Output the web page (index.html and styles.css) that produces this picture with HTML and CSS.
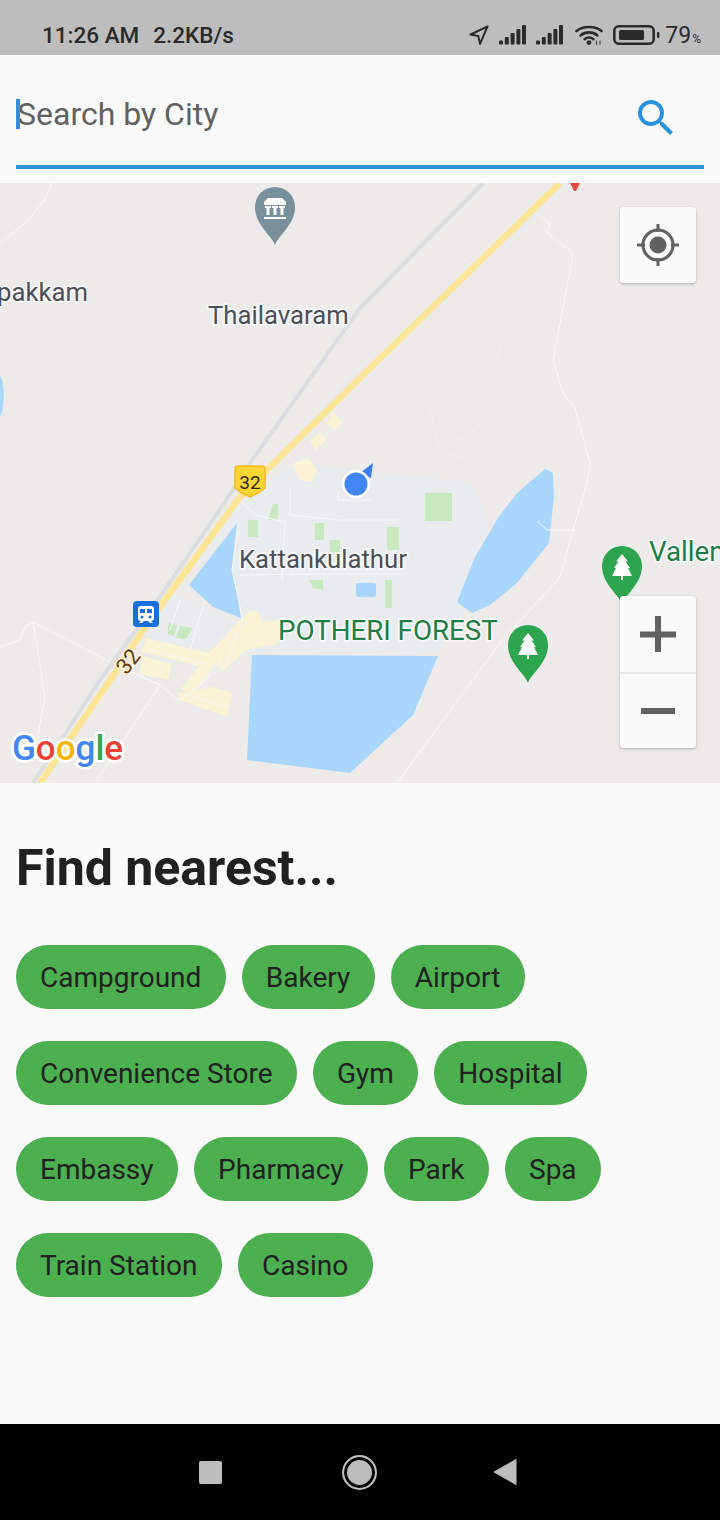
FILE: index.html
```html
<!DOCTYPE html>
<html lang="en">
<head>
  <meta name="viewport" content="width=device-width, initial-scale=1.0">
  <meta charset="UTF-8">
  <title>Find nearest</title>
  <link rel="stylesheet" href="styles.css">
</head>
<body>

<div class="statusbar">
  <div class="status-left"><span>11:26 AM</span><span>2.2KB/s</span></div>
  <div class="status-right">
    <svg class="ic-nav" width="20" height="20" viewBox="0 0 20 20"><path d="M18.500 1.500 1.500 9.500l7.800 1.600 1.700 7.800z" fill="none" stroke="#2b2b2b" stroke-width="2" stroke-linejoin="round"/></svg>
    <svg class="ic-signal" width="27" height="20" viewBox="0 0 27 20"><rect x="0" y="15.500" width="4" height="4" rx="1"/><rect x="5.800" y="12" width="4" height="7.500" rx="1"/><rect x="11.600" y="8" width="4" height="11.500" rx="1"/><rect x="17.400" y="4" width="4" height="15.500" rx="1"/><rect x="23" y="0" width="4" height="19.500" rx="1"/></svg>
    <svg class="ic-signal" width="27" height="20" viewBox="0 0 27 20"><rect x="0" y="15.500" width="4" height="4" rx="1"/><rect x="5.800" y="12" width="4" height="7.500" rx="1"/><rect x="11.600" y="8" width="4" height="11.500" rx="1"/><rect x="17.400" y="4" width="4" height="15.500" rx="1"/><rect x="23" y="0" width="4" height="19.500" rx="1"/></svg>
    <svg class="ic-wifi" width="28" height="20" viewBox="0 0 28 20"><g fill="none" stroke="#2b2b2b" stroke-width="2.600" stroke-linecap="round"><path d="M1.500 6C8 .6 20 .6 26.500 6"/><path d="M5.600 10.400c4.800-4 12-4 16.800 0"/><path d="M9.600 14.200c2.600-2 6.200-2 8.800 0"/></g><circle cx="14" cy="17.600" r="2.400" fill="#2b2b2b"/><path d="M21.500 15.500v4.500M25 15.500v4.500" stroke="#555" stroke-width="1.200"/></svg>
    <svg class="ic-batt" width="47" height="20" viewBox="0 0 47 20"><rect x="1.300" y="1.300" width="39.400" height="17.400" rx="4.500" fill="none" stroke="#2b2b2b" stroke-width="2.600"/><rect x="6" y="5" width="25" height="10" rx="1.500" fill="#2b2b2b"/><rect x="44" y="7" width="2.400" height="6" rx="1" fill="#2b2b2b"/></svg>
    <span class="batt-text">79<small>%</small></span>
  </div>
</div>

<div class="search">
  <div class="search-row">
    <span class="caret"></span>
    <span class="search-hint">Search by City</span>
    <svg class="search-icon" width="48" height="48" viewBox="0 0 24 24"><path d="M15.500 14h-.79l-.28-.27A6.470 6.470 0 0 0 16 9.500 6.500 6.500 0 1 0 9.500 16c1.610 0 3.090-.59 4.230-1.570l.27.28v.79l5 4.990L20.490 19l-4.990-5zm-6 0C7.010 14 5 11.990 5 9.500S7.010 5 9.500 5 14 7.010 14 9.500 11.990 14 9.500 14z"/></svg>
  </div>
</div>

<div class="map">
  <svg class="map-canvas" width="720" height="600" viewBox="0 183 720 600">
    <rect class="land" x="0" y="183" width="720" height="600"/>

    <!-- town -->
    <path class="town" d="M296 462 350 470 470 482 488 520 470 596 440 652 250 652 240 620 190 590 240 500z"/>
    <path class="town" d="M165 590 240 625 215 650 150 640z"/>

    <!-- built up strips -->
    <g class="built">
      <path d="M146 638 212 654 208 668 142 652z"/>
      <path d="M142 656 172 664 168 680 140 674z"/>
      <path d="M177 693 213 687 233 693 227 717 180 700z"/>
      <path d="M180 690 212 650 222 654 196 692z"/>
      <path d="M210 652 248 612 258 610 262 622 278 620 278 644 246 650 222 672z"/>
      <path d="M333 413 343 422 335 430 326 422z"/>
      <path d="M292 464 308 458 317 470 312 482 300 480z"/>
      <path d="M310 442 320 432 326 440 316 450z"/>
    </g>

    <!-- parks -->
    <g class="park">
      <rect x="425" y="493" width="27" height="28"/>
      <rect x="248" y="520" width="10" height="17"/>
      <path d="M268 520 273 504 278 504 278 520z"/>
      <rect x="315" y="523" width="9" height="17"/>
      <rect x="330" y="540" width="10" height="12"/>
      <rect x="387" y="527" width="12" height="23"/>
      <rect x="385" y="580" width="7" height="28"/>
      <path d="M168 623 177 625 174 636 168 634z"/>
      <path d="M180 626 193 628 186 639 176 638z"/>
      <path d="M309 580 323 580 323 590 313 588z"/>
    </g>

    <!-- water -->
    <g class="water">
      <path d="M237 523 232 567 241 618 213 607 189 585z"/>
      <path d="M252 655 438 656 413 715 350 773 247 760z"/>
      <path d="M545 469 553 473 554 497 549 543 517 583 490 605 472 613 457 602 475 557 498 518 517 493z"/>
      <rect x="356" y="583" width="20" height="14" rx="2"/>
      <path d="M0 375C5 385 5 405 0 417z"/>
    </g>

    <!-- minor roads -->
    <g class="road">
      <path d="M535 213 550 223 547 233 572 252 572 260 553 360 563 393 575 408 590 463 587 483 573 530 560 577 500 643 397 783"/>
      <path d="M0 243C25 225 45 205 52 183"/>
      <path d="M0 647 20 640 25 627 33 622 110 662 160 685 178 700"/>
      <path d="M33 622 45 697 37 740"/>
      <path d="M160 685 97 780"/>
      <path d="M537 521 547 530 575 530"/>
      <path d="M150 650 205 664M184 694 228 707M195 690 222 660"/>
    </g>
    <g class="road-town">
      <path d="M290 490 290 515 340 520 400 520M240 500 255 515 285 522M285 520 282 580M338 490 338 500 372 500M240 575 320 574 400 574M205 600 190 650M180 600 170 630"/>
      <path d="M238 530 232 570 243 620 225 665 180 700"/>
    </g>
    <g class="road-faint">
      <path d="M440 300 480 330 500 345 497 360 515 375M445 420 460 440 480 425M430 410 440 450 470 460M450 250 480 270M600 330 640 310"/>
    </g>

    <path class="rail" d="M483 183 360 308 250 463 233 490 160 597 100 680 33 783"/>
    <path class="highway" d="M560 183 360 378 267 470 240 497 143 630 117 670 40 783"/>
    <path class="shade-red" d="M570 183h10l-4 8h-2z"/>

    <!-- labels -->
    <g class="label">
      <text class="label-grey" x="-3" y="301">pakkam</text>
      <text class="label-grey" x="208" y="324">Thailavaram</text>
      <text class="label-grey" x="239" y="568">Kattankulathur</text>
      <text class="label-green" x="278" y="640">POTHERI FOREST</text>
      <text class="label-green" x="649" y="561">Vallen</text>
    </g>

    <!-- museum pin -->
    <g transform="translate(275 187)">
      <path class="pin-grey" d="M0 58C-2 50-20 38-20 20A20 20 0 1 1 20 20C20 38 2 50 0 58Z"/>
      <path class="pin-glyph" d="M-7 11H7L11 15V18H-11V15ZM-10 19H-4V21H-5.500V28H-8.500V21H-10ZM-3 19H3V21H1.500V28H-1.500V21H-3ZM4 19H10V21H8.500V28H5.500V21H4ZM-11 30H11V32H-11Z"/>
    </g>

    <!-- forest pins -->
    <g transform="translate(528 625)">
      <path class="pin-green" d="M0 58C-2 50-20 38-20 20A20 20 0 1 1 20 20C20 38 2 50 0 58Z"/>
      <path class="pin-glyph" d="M0 8 6 15.500H3.500L8 22H6L10 30H1V34H-1V30H-10L-6 22H-8L-3.500 15.500H-6Z"/>
    </g>
    <g transform="translate(622 546)">
      <path class="pin-green" d="M0 58C-2 50-20 38-20 20A20 20 0 1 1 20 20C20 38 2 50 0 58Z"/>
      <path class="pin-glyph" d="M0 8 6 15.500H3.500L8 22H6L10 30H1V34H-1V30H-10L-6 22H-8L-3.500 15.500H-6Z"/>
    </g>

    <!-- highway shield -->
    <path class="shield" d="M238 466H262Q265 466 265 469V488L258 493 250 497 242 493 235 488V469Q235 466 238 466Z"/>
    <text class="shield-text" x="250" y="489">32</text>
    <text class="road-num" transform="translate(134 666) rotate(-52)">32</text>

    <!-- train stop -->
    <rect class="train-bg" x="133" y="601" width="26" height="26" rx="4"/>
    <path class="pin-glyph" d="M141 606H151Q154 606 154 609V618Q154 621 151 621L153 623H150L148 621H144L142 623H139L141 621Q138 621 138 618V609Q138 606 141 606ZM140 609V613H145V609ZM147 609V613H152V609ZM142 615.500A1.500 1.500 0 1 0 142 618.500 1.500 1.500 0 1 0 142 615.500ZM150 615.500A1.500 1.500 0 1 0 150 618.500 1.500 1.500 0 1 0 150 615.500Z" fill-rule="evenodd"/>

    <!-- my location -->
    <path class="heading" d="M360 473 373 463 371 478z"/>
    <circle class="me-ring" cx="356" cy="484" r="14"/>
    <circle class="me-dot" cx="356" cy="484" r="11.500"/>

    <!-- google mark -->
    <text class="google" x="12" y="760"><tspan class="g-blue">G</tspan><tspan class="g-red">o</tspan><tspan class="g-yellow">o</tspan><tspan class="g-blue">g</tspan><tspan class="g-green">l</tspan><tspan class="g-red">e</tspan></text>
  </svg>

  <div class="map-btn locate">
    <svg width="44" height="44" viewBox="0 0 44 44"><circle cx="22" cy="22" r="15" fill="none" stroke="#616161" stroke-width="3"/><circle cx="22" cy="22" r="8.500" fill="#616161"/><path d="M22 1v8M22 35v8M1 22h8M35 22h8" stroke="#616161" stroke-width="3"/></svg>
  </div>
  <div class="zoom">
    <div class="zoom-btn">
      <svg width="36" height="36" viewBox="0 0 36 36"><path d="M0 15.500h36v6H0zM15 0h6v36h-6z" fill="#616161"/></svg>
    </div>
    <div class="zoom-btn">
      <svg width="36" height="36" viewBox="0 0 36 36"><path d="M1 15h34v6H1z" fill="#616161"/></svg>
    </div>
  </div>
</div>

<div class="nearest">
  <h1>Find nearest...</h1>
  <div class="chips">
    <span class="chip">Campground</span>
    <span class="chip">Bakery</span>
    <span class="chip">Airport</span>
    <span class="chip">Convenience Store</span>
    <span class="chip">Gym</span>
    <span class="chip">Hospital</span>
    <span class="chip">Embassy</span>
    <span class="chip">Pharmacy</span>
    <span class="chip">Park</span>
    <span class="chip">Spa</span>
    <span class="chip">Train Station</span>
    <span class="chip">Casino</span>
  </div>
</div>

<div class="navbar">
  <span class="nav-square"></span>
  <span class="nav-home"></span>
  <svg class="nav-back" width="24" height="26" viewBox="0 0 24 26"><path d="M23 .5V25.500L1 13z" fill="#bdbdbd" stroke="#bdbdbd" stroke-linejoin="round"/></svg>
</div>

</body>
</html>
```

FILE: styles.css
```css
* {
  box-sizing: border-box;
}

body {
  margin: 0;
  width: 720px;
  height: 1520px;
  display: flex;
  flex-direction: column;
  background-color: #fafafa;
  font-family: Roboto, sans-serif;
  color: #212121;
  overflow: hidden;
}

/* status bar */
.statusbar {
  height: 55px;
  flex: none;
  display: flex;
  justify-content: space-between;
  padding: 25px 19px 0 42px;
  background-color: #bdbdbd;
  color: #2b2b2b;
}

.status-left {
  display: flex;
  gap: 14px;
  font-size: 22.5px;
  font-weight: 500;
  line-height: 21px;
}

.status-right {
  display: flex;
  align-items: flex-start;
}

.ic-signal {
  fill: #2b2b2b;
  margin-left: 10px;
}

.ic-wifi {
  margin-left: 12px;
}

.ic-batt {
  margin-left: 10px;
}

.batt-text {
  margin-left: 5px;
  font-size: 23px;
  line-height: 22px;
}

.batt-text small {
  font-size: 12px;
  margin-left: 1px;
}

/* search */
.search {
  height: 128px;
  flex: none;
  padding: 0 16px;
}

.search-row {
  height: 114px;
  padding-top: 8px;
  display: flex;
  align-items: center;
  position: relative;
  border-bottom: 4px solid #3493d5;
}

.caret {
  position: absolute;
  left: 0;
  top: 44px;
  width: 4px;
  height: 30px;
  background-color: #2f8fdb;
}

.search-hint {
  flex: 1;
  margin-left: 1px;
  font-size: 32px;
  color: #616161;
}

.search-icon {
  fill: #2b90de;
  margin: 8px 24px 0 0;
}

/* map */
.map {
  position: relative;
  height: 600px;
  flex: none;
}

.map-canvas {
  display: block;
}

.land { fill: #ecebe9; }
.town { fill: #e9ecef; }
.built { fill: #fbf3d6; }
.park { fill: #c8e8c0; }
.water { fill: #a8d6fc; }
.road { fill: none; stroke: #f8f8f7; stroke-width: 1; }
.road-town { fill: none; stroke: #f6f7f8; stroke-width: 1; }
.road-faint { fill: none; stroke: #f1f1f0; stroke-width: 1; }
.rail { fill: none; stroke: #dcdde1; stroke-width: 4; filter: blur(0.6px); }
.highway { fill: none; stroke: #fde596; stroke-width: 6.5; }
.shade-red { fill: #e5483c; }

.label text {
  paint-order: stroke;
  stroke: #f8f8f8;
  stroke-width: 3.5px;
  stroke-linejoin: round;
}

.label .label-grey {
  font-size: 25.7px;
  fill: #4b5058;
}

.label .label-green {
  font-size: 27.7px;
  fill: #1e7e45;
}

.pin-grey { fill: #78909c; }
.pin-green { fill: #2da44e; }
.pin-glyph { fill: #fff; }

.shield { fill: #fdd633; stroke: #f2b92a; stroke-width: 1.5; }

.shield-text {
  font-size: 19px;
  text-anchor: middle;
  fill: #2b2b1a;
}

.road-num {
  font-size: 22px;
  text-anchor: middle;
  fill: #5d3a1a;
  paint-order: stroke;
  stroke: #fdf3d2;
  stroke-width: 3px;
}

.train-bg { fill: #1a6fdc; }
.heading { fill: #3f7de8; }
.me-ring { fill: #fff; }
.me-dot { fill: #4285f4; }

.google {
  font-size: 35px;
  font-weight: 500;
  paint-order: stroke;
  stroke: #fff;
  stroke-width: 5px;
  stroke-linejoin: round;
}

.g-blue { fill: #4285f4; }
.g-red { fill: #ea4335; }
.g-yellow { fill: #f4b400; }
.g-green { fill: #34a853; }

.map-btn, .zoom {
  position: absolute;
  left: 620px;
  width: 76px;
  background-color: #fafafa;
  border-radius: 3px;
  box-shadow: 0 1px 3px rgba(0,0,0,0.25);
}

.locate {
  top: 24px;
  height: 76px;
  display: flex;
  align-items: center;
  justify-content: center;
}

.zoom {
  top: 413px;
  height: 152px;
}

.zoom-btn {
  height: 76px;
  display: flex;
  align-items: center;
  justify-content: center;
}

.zoom-btn + .zoom-btn {
  border-top: 2px solid #e6e6e6;
}

/* find nearest */
.nearest {
  flex: 1;
  padding: 57px 16px 0;
}

.nearest h1 {
  margin: 0 0 49px;
  font-size: 50px;
  line-height: 56px;
  font-weight: 700;
}

.chips {
  display: flex;
  flex-wrap: wrap;
  gap: 32px 16px;
}

.chip {
  height: 64px;
  padding: 1px 24.5px 0 24px;
  border-radius: 32px;
  background-color: #4caf50;
  font-size: 28px;
  line-height: 64px;
}

/* android nav */
.navbar {
  height: 96px;
  flex: none;
  display: flex;
  align-items: center;
  padding-left: 199px;
  background-color: #000;
}

.nav-square {
  width: 23px;
  height: 23px;
  border-radius: 2px;
  background-color: #bdbdbd;
}

.nav-home {
  width: 35px;
  height: 35px;
  margin-left: 120px;
  border-radius: 50%;
  background-color: #bdbdbd;
  border: 2.5px solid #bdbdbd;
  box-shadow: inset 0 0 0 3px #000;
}

.nav-back {
  margin-left: 116px;
}
```
